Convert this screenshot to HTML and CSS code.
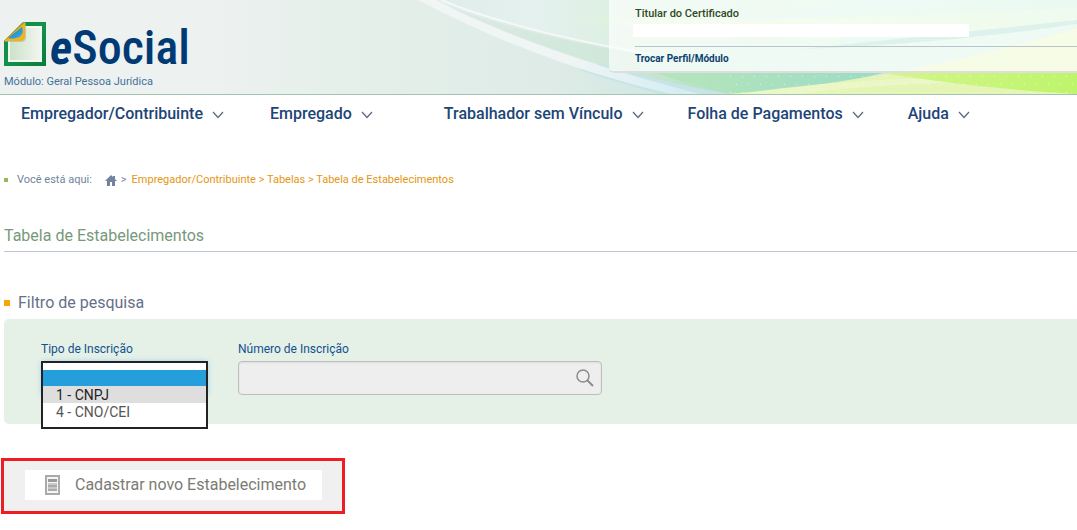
FILE: index.html
```html
<!DOCTYPE html>
<html lang="pt-BR">
<head>
<meta charset="utf-8">
<title>eSocial - Tabela de Estabelecimentos</title>
<meta name="viewport" content="width=device-width, initial-scale=1">
<link rel="stylesheet" href="styles.css">
</head>
<body>
<header class="header">
  <svg class="header-art" viewBox="0 0 1077 94" preserveAspectRatio="xMaxYMid slice" aria-hidden="true">
    <defs>
      <linearGradient id="base" x1="0" x2="1" y1="0" y2="0">
        <stop offset="0" stop-color="#edf1f0"/><stop offset=".2" stop-color="#edf1f0"/>
        <stop offset=".3" stop-color="#e6f0eb"/><stop offset=".52" stop-color="#deebe6"/>
        <stop offset=".6" stop-color="#d2e8e4"/><stop offset="1" stop-color="#d0ebe0"/>
      </linearGradient>
      <linearGradient id="sky" gradientUnits="userSpaceOnUse" x1="440" x2="1077" y1="0" y2="0">
        <stop offset="0" stop-color="#dfece9"/><stop offset=".15" stop-color="#e4f1ef"/>
        <stop offset=".3" stop-color="#dcefe0"/><stop offset=".6" stop-color="#d0f2dc"/><stop offset="1" stop-color="#c4f1d8"/>
      </linearGradient>
      <linearGradient id="teal" gradientUnits="userSpaceOnUse" x1="460" x2="760" y1="0" y2="0">
        <stop offset="0" stop-color="#dce9e3"/><stop offset=".5" stop-color="#cfe8d9"/><stop offset="1" stop-color="#a9dfb8"/>
      </linearGradient>
      <linearGradient id="ribbon" gradientUnits="userSpaceOnUse" x1="700" x2="890" y1="0" y2="0">
        <stop offset="0" stop-color="#b2e4bd"/><stop offset="1" stop-color="#9adbc4"/>
      </linearGradient>
      <linearGradient id="lime" x1="0" x2="1" y1="0" y2="0">
        <stop offset="0" stop-color="#d6f58e"/><stop offset="1" stop-color="#bdf56b"/>
      </linearGradient>
      <linearGradient id="glow" x1="0" x2="1" y1="0" y2="0">
        <stop offset="0" stop-color="#e4f6d8" stop-opacity="0"/><stop offset=".3" stop-color="#e4f6d0"/><stop offset="1" stop-color="#cff3cf"/>
      </linearGradient>
      <linearGradient id="pale" gradientUnits="userSpaceOnUse" x1="413" x2="680" y1="0" y2="0">
        <stop offset="0" stop-color="#f1f6f5"/><stop offset=".6" stop-color="#eef5f4"/><stop offset="1" stop-color="#d6edf3"/>
      </linearGradient>
      <pattern id="dots" width="12" height="16" patternUnits="userSpaceOnUse"><rect x="4" y="4" width="1" height="1" fill="#fff"/><rect x="10" y="12" width="1" height="1" fill="#fff"/></pattern>
    </defs>
    <rect width="1077" height="94" fill="url(#base)"/>
    <path d="M439 0Q540 38 650 54L1077 60V0Z" fill="url(#sky)"/>
    <path d="M540 16Q800 24 1077 8V36Q800 50 540 16Z" fill="url(#glow)"/>
    <path d="M840 36Q980 34 1077 22V38Q960 48 840 44Z" fill="#c6efe6" opacity=".8"/>
    <path d="M900 10Q980 -4 1040 0H860Q780 20 700 24Z" fill="#cceee8" opacity=".6"/>
    <path d="M436 2Q530 38 650 56L800 66L790 94H725Q590 72 436 2Z" fill="url(#teal)"/>
    <path d="M640 66L1077 20V72H888Q820 88 738 94Q680 84 640 66Z" fill="url(#ribbon)"/>
    <path d="M640 50Q860 56 1077 24V72H640Z" fill="#cdf0dc"/>
    <path d="M725 94Q900 82 1077 28V94Z" fill="#e5f5b5"/>
    <path d="M740 94Q860 75 1077 76V82Q900 80 800 94Z" fill="#eef8cc" opacity=".8"/>
    <path d="M870 71H1077V94Q970 88 870 71Z" fill="url(#lime)"/>
    <path d="M600 64Q660 82 730 94H660Q610 80 580 70Z" fill="#c6e4e8"/>
    <path d="M418 0H436Q530 50 700 94H671Q540 64 418 0Z" fill="url(#pale)"/>
    <path d="M441 0Q520 32 650 54" fill="none" stroke="#f4f9f8" stroke-width="2"/>
    <rect x="730" width="347" height="94" fill="url(#dots)" opacity=".6"/>
  </svg>
  <div class="brand">
    <a class="logo" href="#">
      <svg class="logo-mark" viewBox="0 0 44 46" aria-hidden="true">
        <defs>
          <linearGradient id="green" x2="1" y2="1"><stop stop-color="#138741"/><stop offset=".5" stop-color="#13934a"/><stop offset="1" stop-color="#087c3b"/></linearGradient>
          <linearGradient id="paper" x2="1" y2="0"><stop stop-color="#cbe2c8"/><stop offset="1" stop-color="#f0f5ef"/></linearGradient>
          <linearGradient id="blue" x2="1" y2="1"><stop stop-color="#147bc0"/><stop offset="1" stop-color="#34afea"/></linearGradient>
        </defs>
        <path d="M20 1H43V45H1V20Z" fill="url(#green)"/>
        <path d="M20 5H39V41H5V20Z" fill="#f3f8f2"/>
        <path d="M20 7H37V39H7V20Z" fill="url(#paper)"/>
        <path d="M23 1V16Q23 21 18 21H1Z" fill="#a9b89a" opacity=".6"/>
        <path d="M22 1V16Q21 20 17 20L1 20Z" fill="#f2b11d"/>
        <path d="M19 6Q22 15 13 17Q8 18 5 17Z" fill="url(#blue)"/>
        <path d="M21 1L1 20" stroke="#c99a2a" stroke-width="1"/>
      </svg>
      <span class="logo-text"><i>e</i>Social</span>
    </a>
    <p class="module">Módulo: Geral Pessoa Jurídica</p>
  </div>
  <section class="profile">
    <p class="holder">Titular do Certificado</p>
    <div class="holder-name"></div>
    <a class="switch" href="#">Trocar Perfil/Módulo</a>
  </section>
</header>

<nav class="menu">
  <button class="menu-item wide" type="button">Empregador/Contribuinte<svg class="chevron" viewBox="0 0 12 8" aria-hidden="true"><path d="M1 1L6 6.500L11 1"/></svg></button>
  <button class="menu-item wider" type="button">Empregado<svg class="chevron" viewBox="0 0 12 8" aria-hidden="true"><path d="M1 1L6 6.500L11 1"/></svg></button>
  <button class="menu-item" type="button">Trabalhador sem Vínculo<svg class="chevron" viewBox="0 0 12 8" aria-hidden="true"><path d="M1 1L6 6.500L11 1"/></svg></button>
  <button class="menu-item" type="button">Folha de Pagamentos<svg class="chevron" viewBox="0 0 12 8" aria-hidden="true"><path d="M1 1L6 6.500L11 1"/></svg></button>
  <button class="menu-item" type="button">Ajuda<svg class="chevron" viewBox="0 0 12 8" aria-hidden="true"><path d="M1 1L6 6.500L11 1"/></svg></button>
</nav>

<main class="content">
  <nav class="breadcrumb" aria-label="Você está aqui">
    <span class="here">Você está aqui:</span>
    <a class="home" href="#" aria-label="Início"><svg viewBox="0 0 12 11" aria-hidden="true"><path d="M6 0L8 2V1H10V4L12 6H10V11H7V7H5V11H2V6H0Z"/></svg></a>
    <span class="sep">&gt;</span>
    <span class="trail"><a href="#">Empregador/Contribuinte</a> &gt; <a href="#">Tabelas</a> &gt; <a href="#">Tabela de Estabelecimentos</a></span>
  </nav>
  <h1 class="title">Tabela de Estabelecimentos</h1>
  <h2 class="subtitle">Filtro de pesquisa</h2>
  <form class="filter">
    <div class="field type">
      <label for="tipo">Tipo de Inscrição</label>
      <div class="select-slot">
        <select id="tipo" class="list" size="3">
          <option value="" selected></option>
          <option value="1" class="hover">1 - CNPJ</option>
          <option value="4">4 - CNO/CEI</option>
        </select>
      </div>
    </div>
    <div class="field number">
      <label for="numero">Número de Inscrição</label>
      <div class="search">
        <input id="numero" type="text">
        <button type="button" aria-label="Pesquisar"><svg viewBox="0 0 18 18" aria-hidden="true"><circle cx="7" cy="7" r="6"/><path d="M11 11L17 17" stroke-width="2"/></svg></button>
      </div>
    </div>
  </form>
  <div class="actions">
    <button class="new" type="button">
      <svg viewBox="0 0 15 20" aria-hidden="true"><rect x="1" y="1" width="13" height="18" fill="#f5f5f5" stroke="#aaa" stroke-width="2"/><path d="M3 5.500H12" stroke="#999" stroke-width="3"/><path d="M3 9H12M3 13H12" stroke="#c8c8c8" stroke-width="2"/><path d="M3 11H12M3 15H12" stroke="#aaa" stroke-width="2"/></svg>
      Cadastrar novo Estabelecimento
    </button>
  </div>
</main>
</body>
</html>
```

FILE: styles.css
```css
* { box-sizing: border-box; }
body { margin: 0; background: #fff; font-family: Roboto, "Liberation Sans", sans-serif; font-size: 12px; }
p, h1, h2 { margin: 0; font-weight: 400; }
a { color: inherit; text-decoration: none; }
button { font: inherit; border: 0; background: none; padding: 0; cursor: pointer; }
svg { display: block; }

.header { position: relative; display: flex; justify-content: space-between; align-items: flex-start; height: 95px; border-bottom: 1px solid #a3c4ae; background: #edf1f0; overflow: hidden; }
.header-art { position: absolute; inset: 0; width: 100%; height: 100%; }
.brand { position: relative; padding: 21px 0 0 3px; }
.logo { display: flex; align-items: flex-start; gap: 3px; height: 53px; }
.logo-mark { width: 44px; height: 46px; }
.logo-text { color: #003a75; font-family: "Roboto Condensed", "Liberation Sans", sans-serif; font-weight: 500; font-size: 48px; line-height: 54px; }
.logo-text i { font-weight: 700; }
.module { padding-left: 1px; color: #45719b; font-size: 11px; line-height: 16px; }

.profile { position: relative; width: 468px; padding: 6px 0 5px 26px; background: rgba(255, 255, 255, .65); border-bottom: 2px solid #dedede; border-bottom-left-radius: 5px; }
.holder { color: #2f4a1e; font-weight: 500; font-size: 11px; line-height: 16px; }
.holder-name { width: 336px; height: 13px; margin: 2px 0 9px -2px; background: #fff; }
.switch { display: block; padding-top: 5px; border-top: 1px solid #b9c5cc; color: #0d3f70; font-weight: 700; font-size: 10px; line-height: 14px; }

.menu { display: flex; padding: 9px 0 0 21px; gap: 44px; }
.menu-item { display: flex; align-items: center; gap: 9px; color: #1d4577; font-weight: 500; font-size: 16px; line-height: 20px; white-space: nowrap; }
.wide { margin-right: 2px; }
.wider { margin-right: 27px; }
.chevron { width: 12px; height: 8px; margin-top: 2px; fill: none; stroke: #5d6b80; stroke-width: 1.3; }

.content { padding-left: 4px; }
.breadcrumb { display: flex; align-items: center; margin-top: 48px; color: #70849e; font-size: 11px; line-height: 16px; }
.breadcrumb::before { content: ""; width: 4px; height: 4px; margin-right: 9px; background: #96b957; }
.home { margin: 0 4px 0 13px; }
.home svg { width: 12px; height: 11px; fill: #70849e; }
.sep { margin-right: 5px; }
.trail { color: #e59612; }
.title { margin-top: 37px; padding: 0 0 4px; border-bottom: 1px solid #bcc6d6; color: #76997b; font-size: 16px; line-height: 22px; }
.subtitle { display: flex; align-items: center; margin-top: 40px; color: #667088; font-size: 16px; line-height: 22px; }
.subtitle::before { content: ""; width: 6px; height: 6px; margin-right: 8px; background: #f7a60a; }

.filter { display: flex; gap: 30px; height: 105px; margin-top: 5px; padding: 22px 37px; background: #e5f0e6; border-radius: 5px 0 0 5px; }
.field label { display: block; margin-bottom: 4px; color: #13508f; font-size: 12px; line-height: 16px; }
.type { width: 167px; }
.number { width: 364px; }
.select-slot { position: relative; height: 34px; border-radius: 4px; box-shadow: 0 0 5px #9fd3ee; }
.list { position: absolute; top: 0; left: 0; width: 100%; height: 68px; padding: 7px 0; border: 2px solid #202224; border-radius: 0; outline: 0; background: #fff; color: #555; font: 14px/18px Roboto, "Liberation Sans", sans-serif; overflow: hidden; }
.list option { height: 17px; min-height: 17px; padding: 1px 13px 0; line-height: 17px; }
.list option:checked { height: 16px; min-height: 16px; background: #259fdc linear-gradient(#259fdc, #259fdc); }
.list .hover { background: #dedede; color: #222; }
.search { display: flex; align-items: center; height: 34px; padding-right: 7px; border: 1px solid #bdbdbd; border-radius: 4px; background: #eee; box-shadow: inset 0 1px 2px #ddd; }
.search input { flex: 1; min-width: 0; height: 30px; padding: 0 8px; border: 0; outline: 0; background: transparent; font: 14px Roboto, sans-serif; }
.search svg { width: 18px; height: 18px; fill: none; stroke: #8c8c8c; stroke-width: 1.5; }

.actions { width: 344px; margin: 34px 0 0 -3px; padding: 9px 20px 11px 21px; border: 3px solid #ef1c24; background: #f0f0f0; }
.new { display: flex; align-items: center; gap: 15px; height: 30px; padding: 0 16px 0 20px; background: #fff; color: #7b7b73; font-size: 16px; line-height: 20px; white-space: nowrap; }
.new svg { width: 15px; height: 20px; }
```
